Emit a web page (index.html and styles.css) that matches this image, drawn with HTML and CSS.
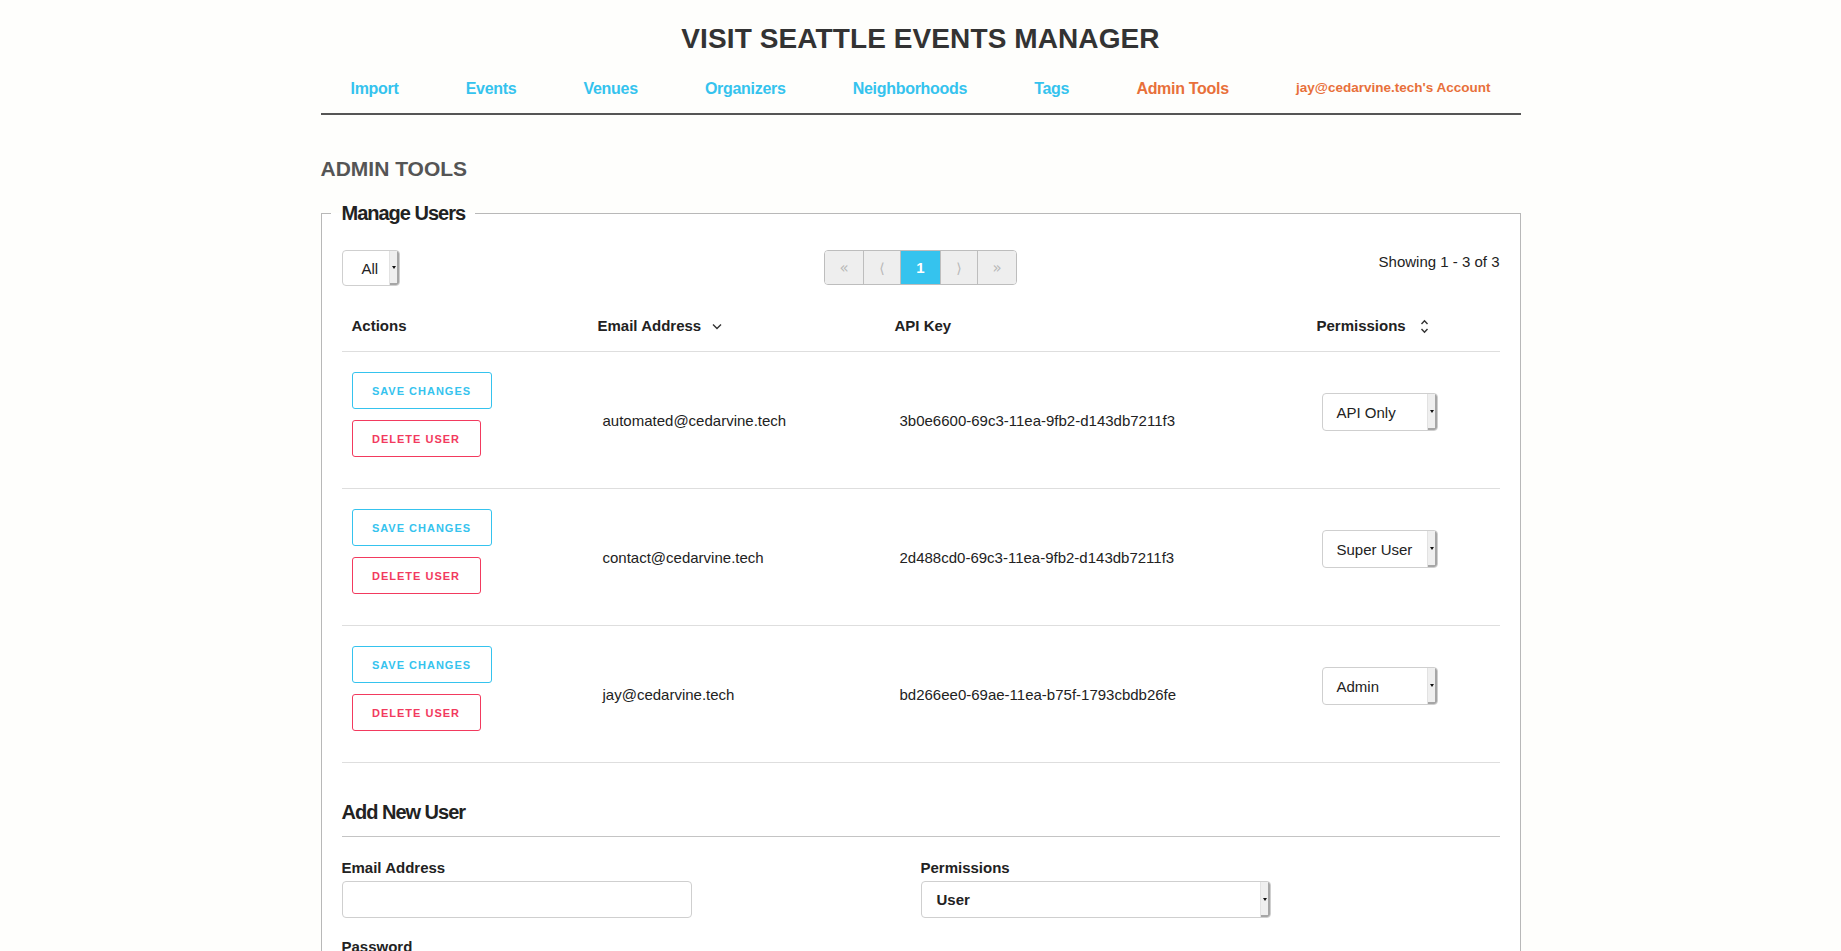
FILE: index.html
```html
<!DOCTYPE html>
<html lang="en">
<head>
<meta charset="utf-8">
<title>Visit Seattle Events Manager - Admin Tools</title>
<link rel="stylesheet" href="styles.css">
</head>
<body>
<header class="site-header">
  <h1 class="site-title">VISIT SEATTLE EVENTS MANAGER</h1>
  <nav class="main-nav">
    <a class="nav-link" href="#">Import</a>
    <a class="nav-link" href="#">Events</a>
    <a class="nav-link" href="#">Venues</a>
    <a class="nav-link" href="#">Organizers</a>
    <a class="nav-link" href="#">Neighborhoods</a>
    <a class="nav-link" href="#">Tags</a>
    <a class="nav-link active" href="#">Admin Tools</a>
    <a class="nav-link nav-account" href="#">jay@cedarvine.tech's Account</a>
  </nav>
</header>

<main class="page">
  <h2 class="page-title">ADMIN TOOLS</h2>

  <fieldset class="panel">
    <legend class="panel-legend">Manage Users</legend>

    <div class="toolbar">
      <div class="toolbar-left">
        <span class="sel sel-filter"><span class="sel-text">All</span><span class="sel-arrow"></span></span>
      </div>
      <div class="pager">
        <span class="pg pg-first">&laquo;</span>
        <span class="pg pg-prev">&#10216;</span>
        <span class="pg pg-cur">1</span>
        <span class="pg pg-next">&#10217;</span>
        <span class="pg pg-last">&raquo;</span>
      </div>
      <div class="showing">Showing 1 - 3 of 3</div>
    </div>

    <table class="users">
      <colgroup>
        <col class="c-actions">
        <col class="c-email">
        <col class="c-key">
        <col class="c-perm">
      </colgroup>
      <thead>
        <tr>
          <th>Actions</th>
          <th>Email Address <svg class="sort-icon" width="10" height="7" viewBox="0 0 10 7"><path d="M1 1.5l4 4 4-4" fill="none" stroke="#333" stroke-width="1.4"/></svg></th>
          <th>API Key</th>
          <th>Permissions <svg class="sort-icon sort-both" width="9" height="15" viewBox="0 0 9 15"><path d="M1.5 5l3-3.2 3 3.2M1.5 10l3 3.2 3-3.2" fill="none" stroke="#333" stroke-width="1.4"/></svg></th>
        </tr>
      </thead>
      <tbody>
        <tr>
          <td class="td-actions">
            <button class="btn btn-save" type="button">SAVE CHANGES</button>
            <button class="btn btn-delete" type="button">DELETE USER</button>
          </td>
          <td class="td-data">automated@cedarvine.tech</td>
          <td class="td-data">3b0e6600-69c3-11ea-9fb2-d143db7211f3</td>
          <td class="td-data"><div class="perm-wrap"><span class="sel sel-perm"><span class="sel-text">API Only</span><span class="sel-arrow"></span></span></div></td>
        </tr>
        <tr>
          <td class="td-actions">
            <button class="btn btn-save" type="button">SAVE CHANGES</button>
            <button class="btn btn-delete" type="button">DELETE USER</button>
          </td>
          <td class="td-data">contact@cedarvine.tech</td>
          <td class="td-data">2d488cd0-69c3-11ea-9fb2-d143db7211f3</td>
          <td class="td-data"><div class="perm-wrap"><span class="sel sel-perm"><span class="sel-text">Super User</span><span class="sel-arrow"></span></span></div></td>
        </tr>
        <tr>
          <td class="td-actions">
            <button class="btn btn-save" type="button">SAVE CHANGES</button>
            <button class="btn btn-delete" type="button">DELETE USER</button>
          </td>
          <td class="td-data">jay@cedarvine.tech</td>
          <td class="td-data">bd266ee0-69ae-11ea-b75f-1793cbdb26fe</td>
          <td class="td-data"><div class="perm-wrap"><span class="sel sel-perm"><span class="sel-text">Admin</span><span class="sel-arrow"></span></span></div></td>
        </tr>
      </tbody>
    </table>

    <section class="add-user">
      <h3 class="add-title">Add New User</h3>
      <div class="form-grid">
        <div class="field">
          <label class="field-label">Email Address</label>
          <input class="text-input" type="text">
        </div>
        <div class="field">
          <label class="field-label">Permissions</label>
          <span class="sel sel-form"><span class="sel-text">User</span><span class="sel-arrow"></span></span>
        </div>
        <div class="field">
          <label class="field-label">Password</label>
          <input class="text-input" type="password">
        </div>
      </div>
    </section>
  </fieldset>
</main>
</body>
</html>
```

FILE: styles.css
```css
html, body {
  margin: 0;
  padding: 0;
}

body {
  background: #fefefc;
  font-family: "Liberation Sans", Arial, sans-serif;
  color: #222;
}

.site-header,
.page {
  width: 1200px;
  margin: 0 auto;
}

.site-title {
  margin: 0;
  padding-top: 23px;
  font-size: 28px;
  line-height: 32px;
  font-weight: bold;
  text-align: center;
  color: #333;
  letter-spacing: 0.1px;
}

.main-nav {
  display: flex;
  justify-content: space-between;
  align-items: baseline;
  padding: 24px 30px 13px;
  border-bottom: 2px solid #555;
}

.nav-link {
  font-size: 16px;
  line-height: 20px;
  font-weight: bold;
  color: #35c3ee;
  text-decoration: none;
  letter-spacing: -0.3px;
}

.nav-link.active,
.nav-account {
  color: #e8703a;
}

.nav-account {
  font-size: 13.5px;
  letter-spacing: 0;
  position: relative;
  top: -2px;
}

.page-title {
  margin: 42px 0 0;
  font-size: 21px;
  line-height: 24px;
  font-weight: bold;
  color: #555;
  letter-spacing: 0;
}

.panel {
  margin: 20px 0 0;
  padding: 25px 20px 20px;
  border: 1px solid #b8b8b8;
  background: #fff;
  min-width: 0;
}

.panel-legend {
  margin-left: -11px;
  padding: 0 10px 0 11px;
  font-size: 20px;
  line-height: 24px;
  font-weight: bold;
  color: #222;
  letter-spacing: -1px;
}

/* toolbar */
.toolbar {
  display: grid;
  grid-template-columns: 1fr auto 1fr;
  align-items: start;
}

.showing {
  text-align: right;
  font-size: 15px;
  line-height: 24px;
  color: #222;
}

/* fake select */
.sel {
  display: inline-flex;
  box-sizing: border-box;
  height: 36px;
  border: 1px solid #cfcfcf;
  border-radius: 4px;
  background: #fff;
  overflow: hidden;
  vertical-align: top;
}

.sel-text {
  flex: 1;
  display: flex;
  align-items: center;
  padding-left: 15px;
  font-size: 15px;
  color: #222;
  white-space: nowrap;
}

.sel-arrow {
  position: relative;
  flex: none;
  width: 9px;
  background: #efefef;
  border-left: 1px solid #e2e2e2;
  box-shadow: inset -2px -2px 0 #a6a6a6;
}

.sel-arrow::after {
  content: "";
  position: absolute;
  left: 2px;
  top: 50%;
  margin-top: -2px;
  border-left: 2.5px solid transparent;
  border-right: 2.5px solid transparent;
  border-top: 3px solid #111;
}

.sel-filter {
  width: 58px;
}

.sel-filter .sel-text {
  padding-left: 19px;
}

.sel-perm {
  width: 116px;
  height: 38px;
}

.sel-perm .sel-text {
  padding-left: 14px;
}

.sel-form {
  width: 350px;
  height: 37px;
}

.sel-form .sel-text {
  font-weight: bold;
}

/* pager */
.pager {
  display: flex;
  height: 35px;
  box-sizing: border-box;
  border: 1px solid #bdbdbd;
  border-radius: 4px;
  overflow: hidden;
}

.pg {
  display: flex;
  align-items: center;
  justify-content: center;
  width: 38px;
  background: #eeeeee;
  color: #b8b8b8;
  font-size: 15px;
  font-family: "DejaVu Sans", "Liberation Sans", sans-serif;
}

.pg + .pg {
  border-left: 1px solid #bdbdbd;
}

.pg-prev,
.pg-next {
  width: 36px;
  font-size: 14px;
}

.pg-cur {
  width: 39px;
  background: #35c3ee;
  color: #fff;
  font-weight: bold;
  font-family: "Liberation Sans", Arial, sans-serif;
}

/* table */
.users {
  width: 100%;
  margin-top: 15px;
  border-collapse: collapse;
  table-layout: fixed;
}

.c-actions { width: 246px; }
.c-email { width: 297px; }
.c-key { width: 422px; }
.c-perm { width: 193px; }

.users th {
  padding: 15px 10px;
  line-height: 20px;
  font-size: 15px;
  font-weight: bold;
  text-align: left;
  color: #222;
  border-bottom: 1px solid #dedede;
  white-space: nowrap;
}

.sort-icon {
  margin-left: 7px;
  vertical-align: middle;
  position: relative;
  top: -1px;
}

.sort-both {
  margin-left: 10px;
}

.users td {
  padding: 20px 10px;
  font-size: 15px;
  color: #222;
  border-bottom: 1px solid #dedede;
  vertical-align: middle;
}

.users td.td-data {
  padding-left: 15px;
}

.btn {
  display: block;
  box-sizing: border-box;
  height: 37px;
  margin: 0 0 11px;
  padding: 0;
  background: #fff;
  border: 1px solid;
  border-radius: 3px;
  font-family: "Liberation Sans", Arial, sans-serif;
  font-size: 11px;
  font-weight: bold;
  letter-spacing: 1px;
  white-space: nowrap;
  text-align: center;
  cursor: pointer;
}

.btn-save {
  width: 140px;
  color: #35c3ee;
  border-color: #35c3ee;
}

.btn-delete {
  width: 129px;
  color: #f23a5e;
  border-color: #f23a5e;
}

.perm-wrap {
  margin-bottom: 16px;
}

/* add user */
.add-user {
  margin-top: 37px;
}

.add-title {
  margin: 0;
  padding-bottom: 12px;
  font-size: 20px;
  line-height: 24px;
  font-weight: bold;
  color: #222;
  letter-spacing: -1px;
  border-bottom: 1px solid #c4c4c4;
}

.form-grid {
  display: grid;
  grid-template-columns: 1fr 1fr;
  padding-top: 22px;
  row-gap: 20px;
}

.field-label {
  display: block;
  margin-bottom: 4px;
  font-size: 15px;
  line-height: 18px;
  font-weight: bold;
  color: #222;
}

.text-input {
  display: block;
  box-sizing: border-box;
  width: 350px;
  height: 37px;
  margin: 0;
  border: 1px solid #cfcfcf;
  border-radius: 4px;
  background: #fff;
}
```
